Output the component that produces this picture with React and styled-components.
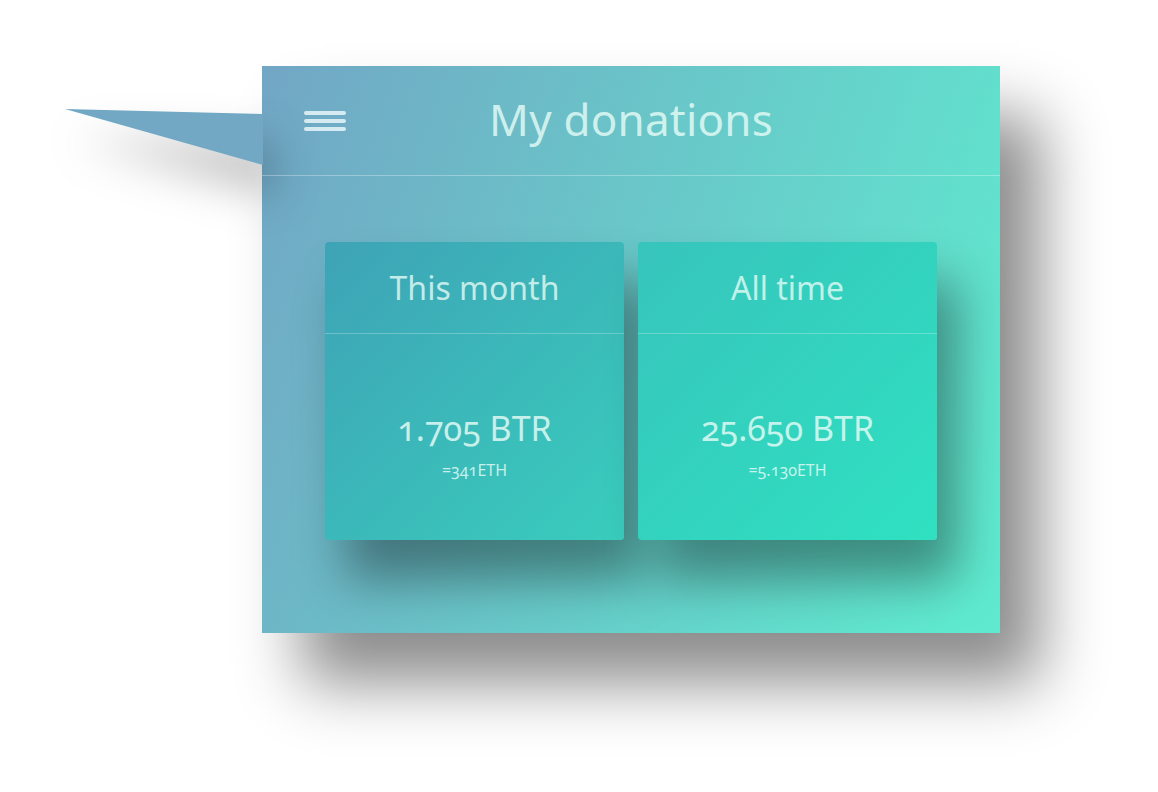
import React from "react";
import styled, { createGlobalStyle } from "styled-components";

const Global = createGlobalStyle`
   html, body {
      margin: 0;
      background: #ffffff;
      font-family: "Noto Sans", "Open Sans", sans-serif;
   }
`;

const Page = styled.div`
   width: 1158px;
   height: 792px;
   padding: 66px 0 0 262px;
   box-sizing: border-box;
   overflow: hidden;
`;

const Panel = styled.section`
   position: relative;
   width: 738px;
   height: 567px;
   background: linear-gradient(110deg, #72a6c5 0%, #6ac3c8 40%, #5feacf 95%);
   box-shadow: 40px 50px 60px rgba(0, 0, 0, 0.45);
   display: flex;
   flex-direction: column;
`;

const Tail = styled.svg`
   position: absolute;
   left: -197px;
   top: 43px;
   overflow: visible;
   filter: drop-shadow(10px 30px 22px rgba(0, 0, 0, 0.25));
`;

const Header = styled.header`
   height: 109px;
   flex-shrink: 0;
   border-bottom: 1px solid rgba(255, 255, 255, 0.3);
   display: flex;
   align-items: center;
   justify-content: center;
   position: relative;
`;

const Burger = styled.div`
   position: absolute;
   left: 42px;
   top: 45px;
   display: flex;
   flex-direction: column;
   gap: 4px;
   span {
      display: block;
      width: 42px;
      height: 4px;
      border-radius: 2px;
      background: rgba(230, 246, 248, 0.85);
   }
`;

const Title = styled.h1`
   margin: 0 0 4px;
   font-size: 44px;
   font-weight: 400;
   color: rgba(225, 250, 245, 0.85);
   letter-spacing: 0.2px;
`;

const Cards = styled.div`
   display: flex;
   gap: 14px;
   padding: 66px 0 0 63px;
`;

const Card = styled.div`
   width: 299px;
   height: 298px;
   flex-shrink: 0;
   border-radius: 4px;
   background: ${(p) => p.bg};
   box-shadow: 20px 40px 50px rgba(0, 0, 0, 0.38);
   display: flex;
   flex-direction: column;
`;

const CardHead = styled.div`
   height: 91px;
   flex-shrink: 0;
   border-bottom: 1px solid rgba(255, 255, 255, 0.25);
   display: flex;
   align-items: center;
   justify-content: center;
   font-size: 32px;
   color: rgba(225, 250, 245, 0.82);
`;

const CardBody = styled.div`
   flex: 1;
   display: flex;
   flex-direction: column;
   align-items: center;
   padding-top: 74px;
   color: rgba(225, 250, 245, 0.85);
   font-variant-numeric: oldstyle-nums;
`;

const Amount = styled.div`
   font-size: 34px;
   line-height: 40px;
`;

const Eth = styled.div`
   font-size: 16px;
   margin-top: 11px;
`;

const cards = [
   { title: "This month", amount: "1.705 BTR", eth: "=341ETH", bg: "linear-gradient(135deg, #3ea3b6 0%, #39cdbd 100%)" },
   { title: "All time", amount: "25.650 BTR", eth: "=5.130ETH", bg: "linear-gradient(135deg, #37c4bc 0%, #2fe1c1 100%)" },
];

export default () => (
   <Page>
      <Global />
      <Panel>
         <Tail width="198" height="57" viewBox="0 0 198 57">
            <polygon points="0,0 198,5 198,56" fill="#72a8c4" />
         </Tail>
         <Header>
            <Burger>
               <span />
               <span />
               <span />
            </Burger>
            <Title>My donations</Title>
         </Header>
         <Cards>
            {cards.map((c) => (
               <Card key={c.title} bg={c.bg}>
                  <CardHead>{c.title}</CardHead>
                  <CardBody>
                     <Amount>{c.amount}</Amount>
                     <Eth>{c.eth}</Eth>
                  </CardBody>
               </Card>
            ))}
         </Cards>
      </Panel>
   </Page>
);
